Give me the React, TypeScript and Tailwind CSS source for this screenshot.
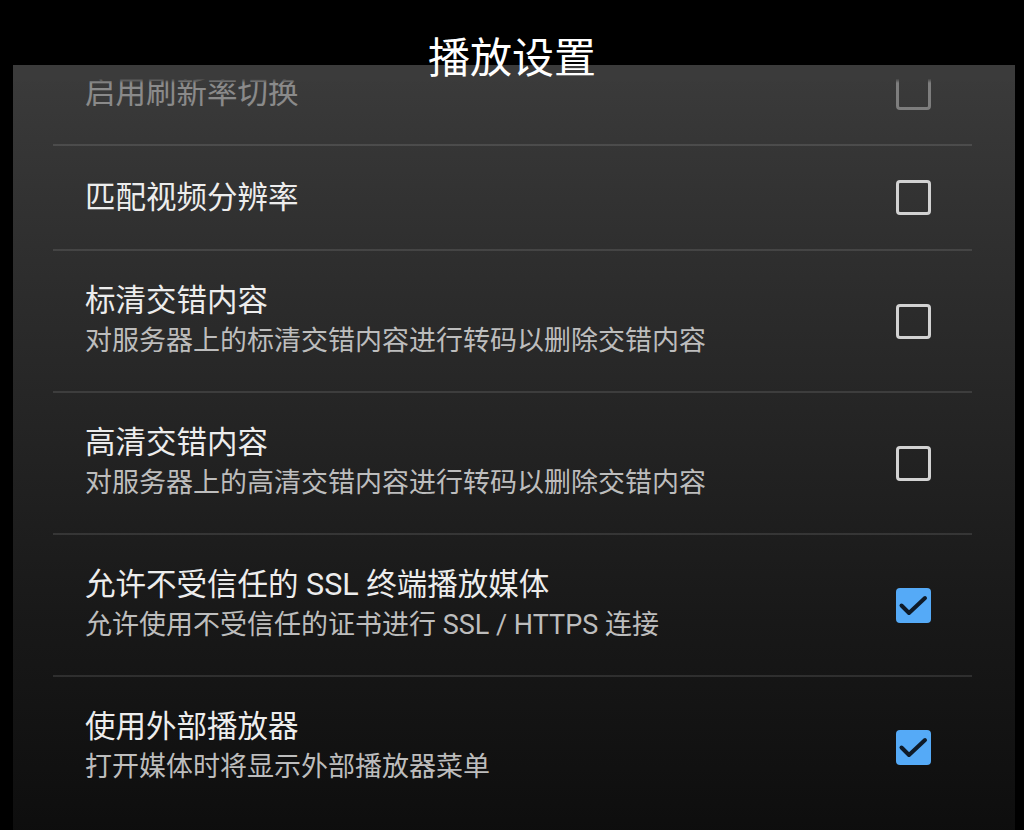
const rows = [
  { title: '启用刷新率切换', checked: false, faded: true },
  { title: '匹配视频分辨率', checked: false },
  {
    title: '标清交错内容',
    subtitle: '对服务器上的标清交错内容进行转码以删除交错内容',
    checked: false,
  },
  {
    title: '高清交错内容',
    subtitle: '对服务器上的高清交错内容进行转码以删除交错内容',
    checked: false,
  },
  {
    title: '允许不受信任的 SSL 终端播放媒体',
    subtitle: '允许使用不受信任的证书进行 SSL / HTTPS 连接',
    checked: true,
  },
  {
    title: '使用外部播放器',
    subtitle: '打开媒体时将显示外部播放器菜单',
    checked: true,
  },
];

function CheckBox({ checked }: { checked: boolean }) {
  if (checked) {
    return (
      <div className="h-[35px] w-[35px] shrink-0 rounded-[4px] bg-[#55aaf7]">
        <svg viewBox="0 0 35 35" className="h-[35px] w-[35px]">
          <polyline
            points="5.5,17.5 13,25 29,10"
            fill="none"
            stroke="#0e1a28"
            strokeWidth="4"
            strokeLinecap="round"
            strokeLinejoin="round"
          />
        </svg>
      </div>
    );
  }
  return <div className="h-[35px] w-[35px] shrink-0 rounded-[4px] border-[3px] border-[#d2d2d2]" />;
}

export default function App() {
  return (
    <div
      className="relative h-[830px] w-[1024px] overflow-hidden bg-black"
      style={{ fontFamily: 'Roboto, "Noto Sans CJK SC", sans-serif' }}
    >
      <h1 className="relative z-10 pt-[38px] text-center text-[42px] leading-[42px] font-normal text-white">
        播放设置
      </h1>

      <div className="relative z-0 -mt-[15px] ml-[13px] h-[900px] w-[1002px] overflow-hidden bg-[linear-gradient(to_bottom,#3b3b3b_0%,#2f2f2f_20%,#232323_42%,#181818_62%,#111111_78%,#0a0a0a_92%,#080808_100%)]">
        <div className="pointer-events-none absolute inset-x-0 top-0 z-10 h-[18px] bg-gradient-to-b from-[#3b3b3b] from-75% to-transparent" />

        <div className="-mt-[24px] flex flex-col pr-[43px] pl-[40px]">
          {rows.map((row, i) => (
            <div key={row.title} className="flex flex-col">
              {i > 0 ? <div className="h-[2px] bg-[#ffffff1c]" /> : null}
              <div
                className={`flex items-center justify-between pr-[41px] pl-[32px] ${
                  row.subtitle ? 'h-[140px]' : 'h-[103px]'
                } ${row.faded ? 'opacity-45' : ''}`}
              >
                <div className="flex flex-col">
                  <span className="text-[30.5px] leading-[40px] text-[#ededed]">{row.title}</span>
                  {row.subtitle ? (
                    <span className="text-[27px] leading-[40px] text-[#bdbdbd]">{row.subtitle}</span>
                  ) : null}
                </div>
                <CheckBox checked={row.checked} />
              </div>
            </div>
          ))}
        </div>
      </div>
    </div>
  );
}
